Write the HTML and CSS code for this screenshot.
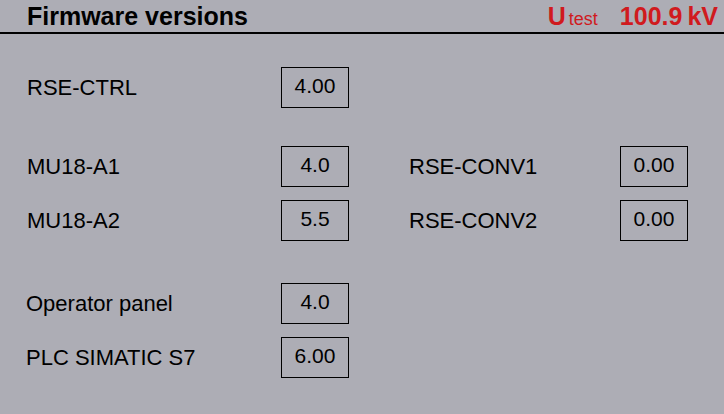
FILE: index.html
```html
<!DOCTYPE html>
<html>
<head>
<meta charset="utf-8">
<link rel="stylesheet" href="styles.css">
</head>
<body>
<div class="screen">
  <header class="topbar">
    <h1 class="title">Firmware versions</h1>
    <div class="measure"><span class="u">U</span><span class="sub">test</span><span class="val">100.9</span><span class="unit">kV</span></div>
  </header>
  <main class="content">
    <section class="group g1">
      <div class="label">RSE-CTRL</div><div class="box">4.00</div>
    </section>
    <section class="group g2">
      <div class="label">MU18-A1</div><div class="box">4.0</div>
      <div class="label label-r">RSE-CONV1</div><div class="box">0.00</div>
      <div class="label">MU18-A2</div><div class="box">5.5</div>
      <div class="label label-r">RSE-CONV2</div><div class="box">0.00</div>
    </section>
    <section class="group g3">
      <div class="label">Operator panel</div><div class="box">4.0</div>
      <div class="label">PLC SIMATIC S7</div><div class="box">6.00</div>
    </section>
  </main>
</div>
</body>
</html>
```

FILE: styles.css
```css
html, body {
  margin: 0;
  padding: 0;
  background: #adadb5;
}
.screen {
  width: 724px;
  height: 414px;
  font-family: "Liberation Sans", Arial, sans-serif;
  color: #000;
  background: #adadb5;
}
.topbar {
  display: flex;
  justify-content: space-between;
  align-items: baseline;
  height: 34px;
  box-sizing: border-box;
  padding: 0 6px 0 27px;
  border-bottom: 2px solid #000;
}
.title {
  margin: 0;
  font-size: 25px;
  font-weight: bold;
  line-height: 32px;
}
.measure {
  display: flex;
  align-items: baseline;
  color: #d01a1e;
  line-height: 32px;
  white-space: nowrap;
}
.u {
  font-size: 25px;
  font-weight: bold;
}
.sub {
  font-size: 18px;
  margin-left: 3px;
}
.val {
  font-size: 25px;
  font-weight: bold;
  margin-left: 22px;
}
.unit {
  font-size: 25px;
  font-weight: bold;
  margin-left: 5px;
}
.content {
  padding-left: 27px;
  padding-top: 33px;
}
.group {
  display: grid;
  grid-template-columns: 254px 68px 60px 211px 68px;
  grid-auto-rows: 41px;
  row-gap: 13px;
  align-items: center;
}
.g2 { margin-top: 38px; }
.g3 { margin-top: 42px; }
.g3 .label { margin-left: -1px; }
.label {
  font-size: 22px;
  line-height: 24px;
  grid-column: 1;
}
.label-r {
  grid-column: 4;
}
.box {
  height: 41px;
  box-sizing: border-box;
  border: 1px solid #000;
  display: flex;
  align-items: center;
  justify-content: center;
  font-size: 21px;
  padding-bottom: 3px;
}
```
